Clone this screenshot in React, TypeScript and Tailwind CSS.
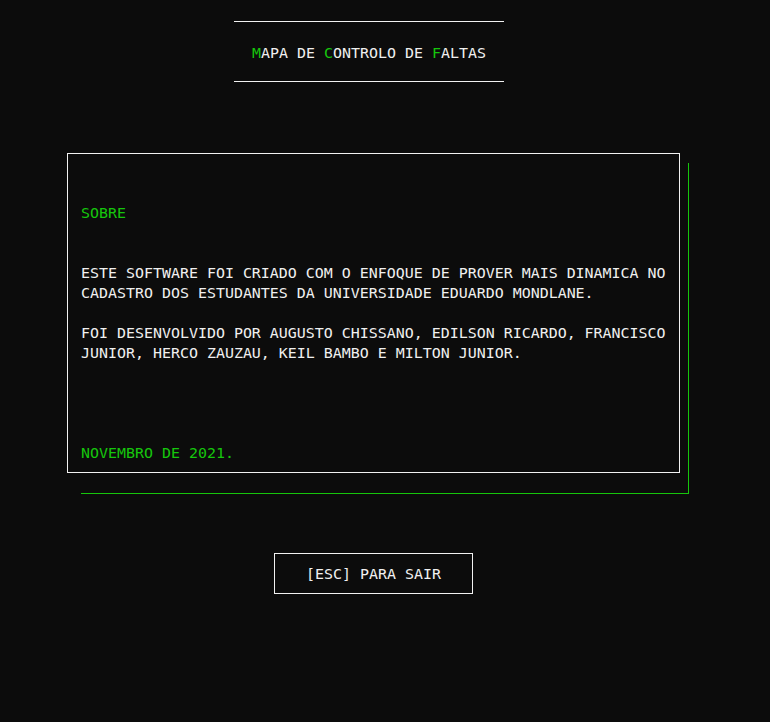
import React from "react";

const G = "text-[#16c60c]";

export default function App() {
  return (
    <div
      className="min-h-[722px] w-[770px] bg-[#0c0c0c] text-[#f0f0f0] flex flex-col pt-[21px] text-[14.95px] leading-[20px]"
      style={{ fontFamily: '"DejaVu Sans Mono", "Liberation Mono", monospace' }}
    >
      <div className="ml-[234px] w-[270px] h-[61px] border-t border-b border-[#f2f2f2] pt-[21px] text-center whitespace-pre">
        <span className={G}>M</span>APA DE <span className={G}>C</span>ONTROLO DE <span className={G}>F</span>ALTAS
      </div>

      <div className="relative ml-[67px] mt-[71px] w-[613px] h-[320px]">
        <div className="absolute left-[14px] top-[10px] w-[608px] h-[331px] border-r border-b border-[#16c60c]" />
        <div className="relative w-full h-full border border-[#f2f2f2] bg-[#0c0c0c] pl-[13px] pt-[49px] whitespace-pre">
          <div className={G}>SOBRE</div>
          <div>&nbsp;</div>
          <div>&nbsp;</div>
          <div>ESTE SOFTWARE FOI CRIADO COM O ENFOQUE DE PROVER MAIS DINAMICA NO</div>
          <div>CADASTRO DOS ESTUDANTES DA UNIVERSIDADE EDUARDO MONDLANE.</div>
          <div>&nbsp;</div>
          <div>FOI DESENVOLVIDO POR AUGUSTO CHISSANO, EDILSON RICARDO, FRANCISCO</div>
          <div>JUNIOR, HERCO ZAUZAU, KEIL BAMBO E MILTON JUNIOR.</div>
          <div>&nbsp;</div>
          <div>&nbsp;</div>
          <div>&nbsp;</div>
          <div>&nbsp;</div>
          <div className={G}>NOVEMBRO DE 2021.</div>
        </div>
      </div>

      <div className="ml-[274px] mt-[80px] w-[199px] h-[41px] border border-[#f2f2f2] flex items-center justify-center">
        [ESC] PARA SAIR
      </div>
    </div>
  );
}
